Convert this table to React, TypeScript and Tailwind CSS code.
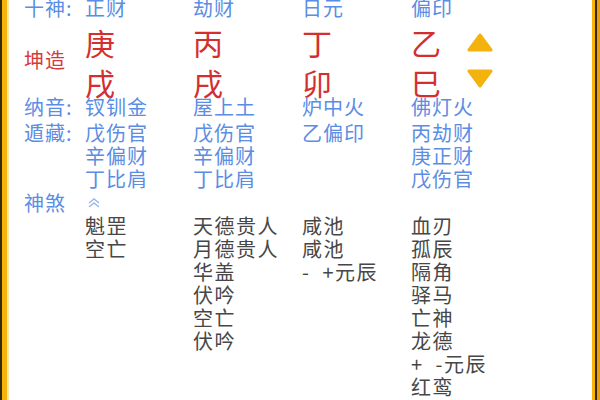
import React from "react";

const blue = "text-[#5b8de4] tracking-[1px]";

const pillars = [
  {
    shen: "正财",
    gan: "庚",
    zhi: "戌",
    nayin: "钗钏金",
    cang: ["戊伤官", "辛偏财", "丁比肩"],
    sha: ["魁罡", "空亡"],
  },
  {
    shen: "劫财",
    gan: "丙",
    zhi: "戌",
    nayin: "屋上土",
    cang: ["戊伤官", "辛偏财", "丁比肩"],
    sha: ["天德贵人", "月德贵人", "华盖", "伏吟", "空亡", "伏吟"],
  },
  {
    shen: "日元",
    gan: "丁",
    zhi: "卯",
    nayin: "炉中火",
    cang: ["乙偏印"],
    sha: ["咸池", "咸池", "- +元辰"],
  },
  {
    shen: "偏印",
    gan: "乙",
    zhi: "巳",
    nayin: "佛灯火",
    cang: ["丙劫财", "庚正财", "戊伤官"],
    sha: ["血刃", "孤辰", "隔角", "驿马", "亡神", "龙德", "+ -元辰", "红鸾"],
  },
];

const Arrow = ({ up }: { up?: boolean }) => (
  <svg width="26" height="19" viewBox="0 0 26 19">
    <path
      d={up ? "M13 2 L24 17 L2 17 Z" : "M2 2 L24 2 L13 17 Z"}
      fill="#f4b20f"
      stroke="#f4b20f"
      strokeWidth="3"
      strokeLinejoin="round"
    />
  </svg>
);

const Row: React.FC<{ className?: string; children: React.ReactNode }> = ({
  className = "",
  children,
}) => (
  <div
    className={`grid grid-cols-[78px_108px_109px_109px_1fr] ${className}`}
  >
    {children}
  </div>
);

export default function App() {
  return (
    <div
      className="w-[600px] h-[400px] flex overflow-hidden bg-white text-[20px] leading-[23px]"
      style={{ fontFamily: '"Noto Sans CJK SC", "Noto Sans", sans-serif' }}
    >
      <div className="w-[2px] bg-[#3a2a0c]" />
      <div className="w-[5px] bg-[#f6b40c]" />
      <div className="w-[2px] bg-[#fde9a8]" />
      <div className="flex-1 flex flex-col -ml-[2px]">
        {/* 十神 */}
        <Row className="-mt-[4px]">
          <div className={`pl-[17px] ${blue}`}>十神:</div>
          {pillars.map((p) => (
            <div key={p.shen} className={blue}>
              {p.shen}
            </div>
          ))}
        </Row>

        {/* 坤造 */}
        <Row className="mt-[8px]">
          <div className="pl-[17px] pb-[4px] flex items-center text-[#d63a3a] tracking-[1px]">
            坤造
          </div>
          {pillars.map((p, i) => (
            <div key={p.shen} className="text-[30px] text-[#d42f2f]">
              <div className="flex items-center h-[30px] leading-[30px]">
                <span>{p.gan}</span>
                {i === 3 && (
                  <span className="ml-[26px] flex">
                    <Arrow up />
                  </span>
                )}
              </div>
              <div className="flex items-center mt-[12px] h-[26px] leading-[26px]">
                <span>{p.zhi}</span>
                {i === 3 && (
                  <span className="ml-[26px] flex -translate-y-[4px]">
                    <Arrow />
                  </span>
                )}
              </div>
            </div>
          ))}
        </Row>

        {/* 纳音 */}
        <Row>
          <div className={`pl-[17px] ${blue}`}>纳音:</div>
          {pillars.map((p) => (
            <div key={p.shen} className={blue}>
              {p.nayin}
            </div>
          ))}
        </Row>

        {/* 遁藏 */}
        <Row className="mt-[3px]">
          <div className={`pl-[17px] ${blue}`}>遁藏:</div>
          {pillars.map((p) => (
            <div key={p.shen} className={blue}>
              {p.cang.map((c, j) => (
                <div key={j}>{c}</div>
              ))}
            </div>
          ))}
        </Row>

        {/* 神煞 */}
        <Row className="mt-[1px]">
          <div className={`pl-[17px] ${blue}`}>神煞</div>
          <div className="flex items-center pl-[2px]">
            <svg width="14" height="12" viewBox="0 0 14 12">
              <path
                d="M2 6 L7 2 L12 6 M2 10 L7 6 L12 10"
                fill="none"
                stroke="#9ab8ee"
                strokeWidth="1.4"
              />
            </svg>
          </div>
        </Row>

        <Row>
          <div />
          {pillars.map((p) => (
            <div key={p.shen} className="text-[#474747] tracking-[1.5px]">
              {p.sha.map((s, j) => (
                <div key={j} className="whitespace-pre">
                  {s.replace(" ", "  ")}
                </div>
              ))}
            </div>
          ))}
        </Row>
      </div>
      <div className="w-[3px] bg-[#f6b40c]" />
      <div className="w-[2px] bg-[#3a2a0c]" />
      <div className="w-[3px] bg-[#e9a30a]" />
    </div>
  );
}
